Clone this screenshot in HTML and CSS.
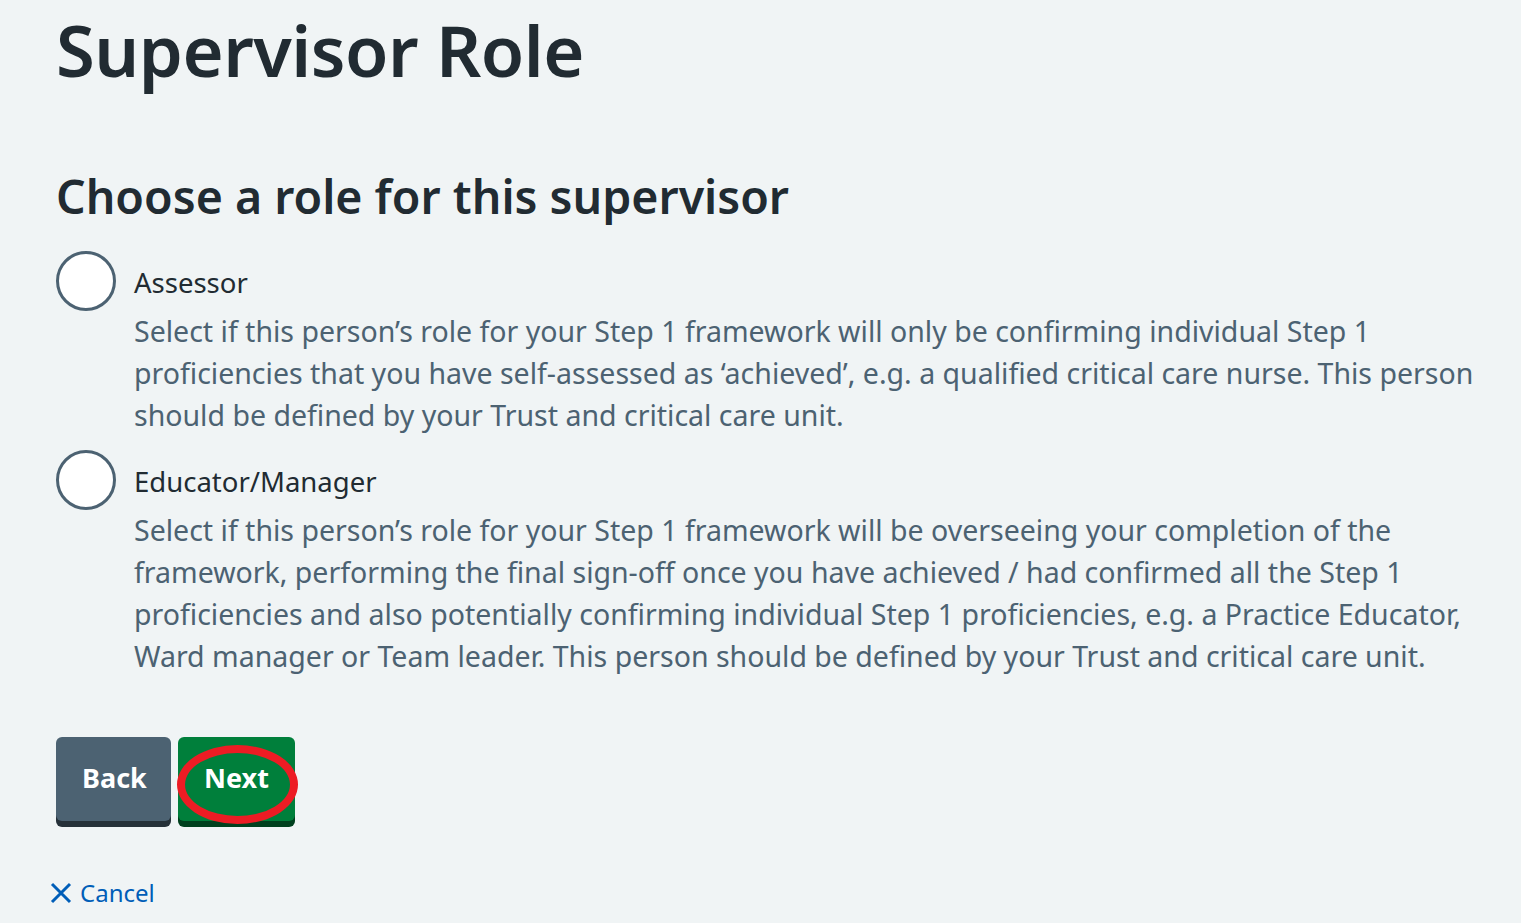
FILE: index.html
```html
<!DOCTYPE html>
<html lang="en">
<head>
<meta charset="utf-8">
<title>Supervisor Role</title>
<link rel="stylesheet" href="styles.css">
</head>
<body>
<main class="page">
  <h1 class="title">Supervisor Role</h1>
  <fieldset class="fieldset">
    <legend class="legend">Choose a role for this supervisor</legend>
    <div class="radios">
      <label class="radio">
        <span class="radio-circle"></span>
        <span class="radio-text">
          <span class="radio-label">Assessor</span>
          <span class="radio-hint">Select if this person’s role for your Step 1 framework will only be confirming individual Step 1 proficiencies that you have self-assessed as ‘achieved’, e.g. a qualified critical care nurse. This person should be defined by your Trust and critical care unit.</span>
        </span>
      </label>
      <label class="radio">
        <span class="radio-circle"></span>
        <span class="radio-text">
          <span class="radio-label">Educator/Manager</span>
          <span class="radio-hint">Select if this person’s role for your Step 1 framework will be overseeing your completion of the framework, performing the final sign-off once you have achieved / had confirmed all the Step 1 proficiencies and also potentially confirming individual Step 1 proficiencies, e.g. a Practice Educator, Ward manager or Team leader. This person should be defined by your Trust and critical care unit.</span>
        </span>
      </label>
    </div>
  </fieldset>
  <div class="buttons">
    <button class="btn btn-back" type="button">Back</button>
    <button class="btn btn-next" type="button">Next<span class="annotation"></span></button>
  </div>
  <a class="cancel" href="#">
    <svg class="cancel-icon" viewBox="0 0 22 22" width="22" height="22" aria-hidden="true"><path d="M2 2 L20 20 M20 2 L2 20" stroke="#005eb8" stroke-width="3" fill="none"/></svg>
    <span>Cancel</span>
  </a>
</main>
</body>
</html>
```
FILE: styles.css
```css
* { box-sizing: border-box; }
body {
  margin: 0;
  background: #f0f4f5;
  color: #212b32;
  font-family: "Noto Sans", "Open Sans", sans-serif;
}
.page {
  padding: 0 56px;
  display: flex;
  flex-direction: column;
  align-items: flex-start;
}
.title {
  margin: -2px 0 0;
  font-size: 70.5px;
  line-height: 104px;
  font-weight: 600;
  letter-spacing: -0.5px;
}
.fieldset {
  border: 0;
  margin: 64px 0 0;
  padding: 0;
  min-width: 0;
}
.legend {
  padding: 0;
  font-size: 46.5px;
  line-height: 60px;
  font-weight: 600;
}
.radios {
  margin-top: 25px;
  display: flex;
  flex-direction: column;
  gap: 14px;
}
.radio {
  display: flex;
  gap: 18px;
  align-items: flex-start;
}
.radio-circle {
  flex: none;
  width: 60px;
  height: 60px;
  border: 3px solid #4c6272;
  border-radius: 50%;
  background: #fff;
}
.radio-text {
  display: flex;
  flex-direction: column;
  padding-top: 11px;
  width: 1345px;
}
.radio-label {
  font-size: 27.5px;
  line-height: 42px;
  color: #212b32;
  margin-bottom: 6px;
}
.radio-hint {
  font-size: 28.5px;
  line-height: 42px;
  color: #4c6272;
}
.buttons {
  margin-top: 60px;
  display: flex;
  gap: 7px;
}
.btn {
  position: relative;
  border: 0;
  border-radius: 6px;
  height: 84px;
  padding: 0 26px 4px;
  font-family: inherit;
  font-size: 27px;
  font-weight: 700;
  color: #fff;
  cursor: pointer;
}
.btn-back {
  width: 115px;
  background: #4c6272;
  box-shadow: 0 6px 0 #263139;
}
.btn-next {
  width: 117px;
  background: #007f3b;
  box-shadow: 0 6px 0 #00401e;
}
.annotation {
  position: absolute;
  left: -1px;
  top: 8px;
  width: 121px;
  height: 79px;
  border: 8px solid #ed1c24;
  border-radius: 50%;
}
.cancel {
  margin-top: 56px;
  margin-left: -6px;
  display: flex;
  align-items: center;
  gap: 8px;
  color: #005eb8;
  text-decoration: none;
  font-size: 24px;
  line-height: 32px;
}
```
